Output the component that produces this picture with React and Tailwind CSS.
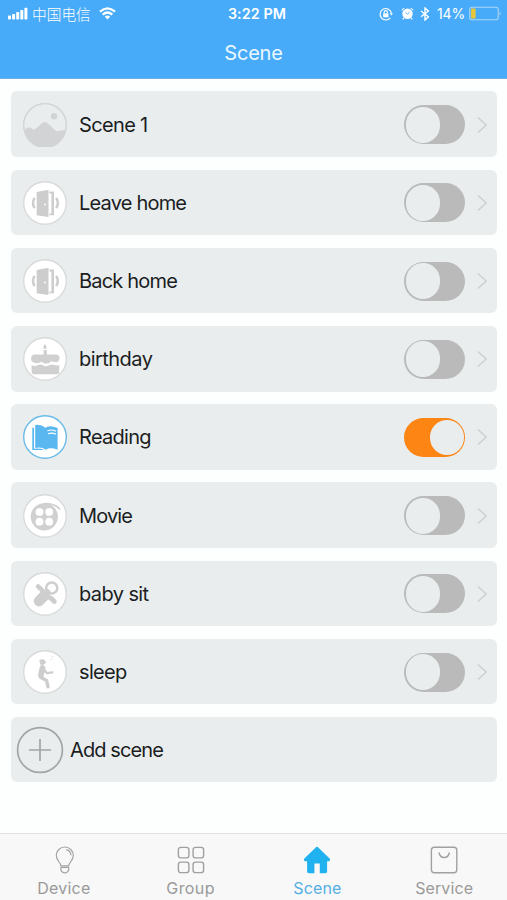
import { useState } from "react";

const SceneIcon = ({ name }) => {
  switch (name) {
    case "picture":
      return (
        <>
          <circle cx="22" cy="22" r="21.3" fill="#e9edee" stroke="#d3d4d5" strokeWidth="1.3" />
          <path d="M1 28 Q3 24.5 6 24.2 Q8.5 24.2 10.5 27 Q15 24.5 18.5 20.6 Q21 17.8 23.5 19.6 Q28 22.5 31.5 27 Q34.5 29.2 37.5 27.6 L43 27 A21.3 21.3 0 0 1 1 28 Z" fill="#d2d3d4" />
          <circle cx="31" cy="13.3" r="3.2" fill="#d2d3d4" />
        </>
      );
    case "door":
      return (
        <g fill="#cdcdcd">
          <path d="M13.7 11 L25.5 8.7 V36 L13.7 34.2 Z" />
          <path d="M26.3 10.4 H31 V34.3 H26.3 V32.4 H28.4 V12.6 H26.3 Z" />
          <circle cx="22" cy="23.5" r="0.9" fill="#fff" />
          <path d="M11.6 16.8 Q8.4 22 11.6 27.2 M33.2 16.8 Q36.4 22 33.2 27.2" fill="none" stroke="#cdcdcd" strokeWidth="2.5" />
        </g>
      );
    case "cake":
      return (
        <g fill="#d0d0d0">
          <path d="M22 7 Q24.6 10 23.2 12 H20.8 Q19.4 10 22 7 Z" />
          <rect x="20.6" y="13" width="3.2" height="6" />
          <path d="M11 17.6 H33.5 Q36.5 18.2 36.5 21.5 Q36 25.4 32.5 25.3 Q29.5 25 28.5 24 Q26 27 22.5 26.5 Q20 26.3 18.5 24.8 Q15 27 11.5 25.7 Q8 25 8 21.5 Q8.4 18.2 11 17.6 Z" />
          <path d="M8.6 28 Q12 30 15 28 Q17.6 26.8 20 28.3 Q23 30.4 26 28.3 Q29 26.6 31.5 28.1 Q34 29.1 36.2 28 V35 Q36 37.3 34 37.3 H11 Q8.6 37.3 8.6 35 Z" />
        </g>
      );
    case "book":
      return (
        <g fill="#5bb7f0">
          <path d="M12.2 10 Q18.5 9.2 22.3 12.7 Q26.5 9.5 34.6 13 V34.7 Q27 32 22.7 34.7 Q18.7 31.6 12.2 33 Z" />
          <path d="M9.3 12.8 H11 V33.7 Q17.5 33 21.3 35 H9.3 Z" />
          <path d="M24.5 15.8 Q28.5 14 33 16.2 M25 18.8 Q29 17.2 33 19.2" fill="none" stroke="#fff" strokeWidth="1.2" />
        </g>
      );
    case "reel":
      return (
        <>
          <circle cx="21.3" cy="22.8" r="13.6" fill="#d0d0d0" />
          <path d="M20 9.9 Q31 8.6 37.2 15.5" fill="none" stroke="#d0d0d0" strokeWidth="1.8" />
          <g fill="#fff">
            <circle cx="16.5" cy="17.9" r="3.9" />
            <circle cx="26.2" cy="17.9" r="3.9" />
            <circle cx="16.5" cy="27.7" r="3.9" />
            <circle cx="26.2" cy="27.7" r="3.9" />
          </g>
        </>
      );
    case "pacifier":
      return (
        <g fill="none" stroke="#cecece" strokeLinecap="round">
          <circle cx="28.7" cy="16" r="5.6" strokeWidth="2.5" />
          <path d="M15.2 14.6 Q18.5 17 19.8 19.5 Q22 23.8 26.4 25.5 Q29 26.5 31.3 29.5" strokeWidth="4.8" />
          <path d="M20.5 24.5 L16 29.2" strokeWidth="10.5" />
          <path d="M24 20.5 L22 23" strokeWidth="7" />
        </g>
      );
    case "sleep":
      return (
        <g fill="none" stroke="#cdcdcd" strokeLinecap="round" strokeLinejoin="round">
          <path d="M17.3 10 H21 L22.5 12.3 L20.8 14.3 H18 Z" fill="#cdcdcd" strokeWidth="1" />
          <path d="M19.5 18 L18 25" strokeWidth="5.8" />
          <path d="M20.5 19 L24 23.2 L29.3 22.3" strokeWidth="2.3" />
          <path d="M17.5 27.3 L23.6 30.5 L25 36.8" strokeWidth="3.4" />
          <path d="M27.3 9.3 H29 M28.5 6.8 H30" strokeWidth="0.8" opacity="0.6" />
        </g>
      );
    default:
      return null;
  }
};

const initialScenes = [
  { id: 1, name: "Scene 1", icon: "picture", on: false, tracking: "tracking-[-0.65px]" },
  { id: 2, name: "Leave home", icon: "door", on: false, tracking: "tracking-[-0.8px]" },
  { id: 3, name: "Back home", icon: "door", on: false, tracking: "tracking-[-0.8px]" },
  { id: 4, name: "birthday", icon: "cake", on: false, tracking: "tracking-[-0.55px]" },
  { id: 5, name: "Reading", icon: "book", on: true, tracking: "tracking-[-0.7px]" },
  { id: 6, name: "Movie", icon: "reel", on: false, tracking: "tracking-[-0.85px]" },
  { id: 7, name: "baby sit", icon: "pacifier", on: false, tracking: "tracking-[-0.6px]" },
  { id: 8, name: "sleep", icon: "sleep", on: false, tracking: "tracking-[-0.65px]" },
];

const StatusBar = () => (
  <div className="grid h-[27px] grid-cols-[1fr_auto_1fr] items-center pl-2 pr-[5px] text-white">
    <div className="flex items-center">
      <svg width="20" height="13" viewBox="0 0 20 13" fill="currentColor">
        <rect x="0" y="8.5" width="3" height="4" rx="0.7" />
        <rect x="4.1" y="7" width="3" height="5.5" rx="0.7" />
        <rect x="8.2" y="5" width="3" height="7.5" rx="0.7" />
        <rect x="12.3" y="3" width="3" height="9.5" rx="0.7" />
        <rect x="16.4" y="0.8" width="3" height="11.7" rx="0.7" />
      </svg>
      <span className="ml-1 font-['Noto_Sans_CJK_SC',sans-serif] text-[14.7px] leading-5 font-light">中国电信</span>
      <svg className="ml-2" width="17" height="13" viewBox="0 0 17 13" fill="none" stroke="currentColor" strokeWidth="2.3">
        <path d="M1 4.6 Q8.5 -1.8 16 4.6" />
        <path d="M3.7 7.6 Q8.5 3.5 13.3 7.6" />
        <path d="M8.5 12.4 L5.8 9.6 Q8.5 7.4 11.2 9.6 Z" fill="currentColor" stroke="none" />
      </svg>
    </div>
    <span className="pl-1 text-[14.3px] font-semibold tracking-[0.1px]">3:22 PM</span>
    <div className="flex items-center justify-end">
      <svg width="14" height="14" viewBox="0 0 14 14" fill="none" stroke="currentColor" strokeWidth="1.1">
        <path d="M11.3 10.8 A5.7 5.7 0 1 1 12.4 6.2" />
        <path d="M10.7 6.2 H14 L12.4 8.6 Z" fill="currentColor" stroke="none" />
        <rect x="4.2" y="6.3" width="5.2" height="4" fill="currentColor" stroke="none" />
        <path d="M5.2 6.4 V5 Q5.2 3.6 6.8 3.6 Q8.4 3.6 8.4 5 V6.4" />
      </svg>
      <svg className="ml-2" width="13" height="13" viewBox="0 0 13 13" fill="currentColor">
        <circle cx="6.5" cy="6.8" r="5.2" />
        <path d="M0.6 4 Q0.6 1 3.9 0.9 Z M12.4 4 Q12.4 1 9.1 0.9 Z" />
        <path d="M2.8 11 L1.8 12.4 M10.2 11 L11.2 12.4" stroke="currentColor" strokeWidth="1.3" />
        <path d="M4.4 5.4 L6.5 7.2 L8.6 4.8" fill="none" stroke="#48abfa" strokeWidth="0.8" />
      </svg>
      <svg className="ml-[6px]" width="10" height="14" viewBox="0 0 10 14" fill="none" stroke="currentColor" strokeWidth="1.4">
        <path d="M1 4 L8.4 9.8 L5 13 V1 L8.4 4 L1 9.8" />
      </svg>
      <span className="ml-[7px] text-[14px] tracking-[-0.2px]">14%</span>
      <svg className="ml-1" width="33" height="15" viewBox="0 0 33 15" fill="none">
        <rect x="0.7" y="1.2" width="28.5" height="12.6" rx="2.2" stroke="#a9d6f5" strokeWidth="1.1" />
        <rect x="2" y="2.5" width="4.6" height="10" rx="1" fill="#e8c63c" />
        <path d="M30.7 5.4 Q32.6 7.5 30.7 9.6 Z" fill="#b9dffa" />
      </svg>
    </div>
  </div>
);

const Toggle = ({ on, onClick }) => (
  <button
    type="button"
    role="switch"
    aria-checked={on}
    onClick={onClick}
    className={`flex h-[39px] w-[61px] items-center rounded-full p-[1.5px] ${
      on ? "justify-end bg-[#fc8514]" : "justify-start bg-[#bababa]"
    }`}
  >
    <span className={`rounded-full bg-[#e9edee] ${on ? "h-[35px] w-[34px]" : "h-9 w-[34px]"}`} />
  </button>
);

const SceneRow = ({ scene, onToggle }) => (
  <div className="flex h-[65.6px] items-center rounded-md bg-[#e9edee] pt-px pl-3 pr-[9px]">
    <svg className="shrink-0" width="44" height="44" viewBox="0 0 44 44">
      <circle cx="22" cy="22" r="21.3" fill="#fff" stroke={scene.on ? "#6abbe9" : "#d9dada"} strokeWidth="1.4" />
      <SceneIcon name={scene.icon} />
    </svg>
    <span className={`ml-3 flex-1 text-[20px] leading-6 ${scene.tracking}`}>{scene.name}</span>
    <Toggle on={scene.on} onClick={() => onToggle(scene.id)} />
    <svg className="ml-3 shrink-0" width="11" height="18" viewBox="0 0 11 18" fill="none" stroke="#cbcdce" strokeWidth="1.3">
      <path d="M1 1.5 L9.2 9 L1 16.5" />
    </svg>
  </div>
);

const tabs = [
  {
    label: "Device",
    tracking: "tracking-[0.25px]",
    icon: (
      <g fill="none" stroke="#a3a3a3" strokeWidth="1.2">
        <path d="M11 19.8 C10.3 16 6.3 14.6 6.3 9.5 A8.5 8.5 0 0 1 23.3 9.5 C23.3 14.6 19.3 16 18.6 19.8 Z" />
        <path d="M11 21.3 H18.6 Q19.4 24 17.6 25.8 Q14.8 28 12 25.8 Q10.2 24 11 21.3 Z" />
        <path d="M16.3 3.7 Q20.7 4.8 21 9.3" />
      </g>
    ),
  },
  {
    label: "Group",
    tracking: "tracking-[0.4px]",
    icon: (
      <g fill="none" stroke="#a0a0a0" strokeWidth="1.4">
        <rect x="1.4" y="1.4" width="10.5" height="10.5" rx="2.4" />
        <rect x="16.1" y="1.4" width="10.5" height="10.5" rx="2.4" />
        <rect x="1.4" y="16.1" width="10.5" height="10.5" rx="2.4" />
        <rect x="16.1" y="16.1" width="10.5" height="10.5" rx="2.4" />
      </g>
    ),
  },
  {
    label: "Scene",
    tracking: "tracking-[0.1px]",
    active: true,
    icon: (
      <path
        d="M12.7 1.4 Q14 0.2 15.3 1.4 L26.6 12.5 Q27.9 14.9 25.7 15.2 H24.1 V25.6 Q24.1 27.3 22.4 27.3 H16.8 V17.5 H11.4 V27.3 H5.8 Q4.1 27.3 4.1 25.6 V15.2 H2.3 Q0.1 14.9 1.4 12.5 Z"
        fill="#20b2ee"
      />
    ),
  },
  {
    label: "Service",
    tracking: "tracking-[0.1px]",
    icon: (
      <g fill="none" stroke="#a0a0a0" strokeWidth="1.4">
        <rect x="1.4" y="1.3" width="25.4" height="25.4" rx="3" />
        <path d="M9 6.5 Q10 11.5 14.2 11.5 Q18.4 11.5 19.4 6.5" />
      </g>
    ),
  },
];

const TabBar = () => (
  <nav className="grid h-[67px] grid-cols-4 border-t-[1.5px] border-[#e3e3e3] bg-[#f8f8f8]">
    {tabs.map((tab) => (
      <div key={tab.label} className="flex flex-col items-center pt-3 pl-px">
        <svg width="28" height="28" viewBox="0 0 28 28">
          {tab.icon}
        </svg>
        <span className={`mt-1 text-[16px] leading-5 ${tab.tracking} ${tab.active ? "text-[#55afe3]" : "text-[#9a9a9a]"}`}>
          {tab.label}
        </span>
      </div>
    ))}
  </nav>
);

export default function App() {
  const [scenes, setScenes] = useState(initialScenes);

  const handleToggle = (id) => {
    setScenes(scenes.map((s) => (s.id === id ? { ...s, on: !s.on } : s)));
  };

  return (
    <div className="flex h-[900px] w-[507px] flex-col overflow-hidden bg-[#fdfefe] font-['Inter',sans-serif] text-[#1b1d1f]">
      <header className="h-[79px] border-b border-[#6fb0e3] bg-[#48abfa]">
        <StatusBar />
        <h1 className="pt-[13px] text-center text-[20px] leading-[26px] tracking-[-0.2px] text-[#eaf8ff]">Scene</h1>
      </header>

      <main className="flex flex-1 flex-col gap-[12.6px] pt-[12.4px] pl-[11px] pr-[10px]">
        {scenes.map((scene) => (
          <SceneRow key={scene.id} scene={scene} onToggle={handleToggle} />
        ))}

        {/* Add scene */}
        <button type="button" className="flex h-[65.6px] items-center rounded-md bg-[#e9edee] pt-px pl-[5px] text-left">
          <svg width="48" height="48" viewBox="0 0 48 48" fill="none" stroke="#a2a5a6" strokeWidth="1.7">
            <circle cx="24" cy="24" r="22.4" />
            <path d="M24 13 V35 M13 24 H35" />
          </svg>
          <span className="ml-1.5 text-[20px] leading-6 tracking-[-0.9px]">Add scene</span>
        </button>
      </main>

      <TabBar />
    </div>
  );
}
